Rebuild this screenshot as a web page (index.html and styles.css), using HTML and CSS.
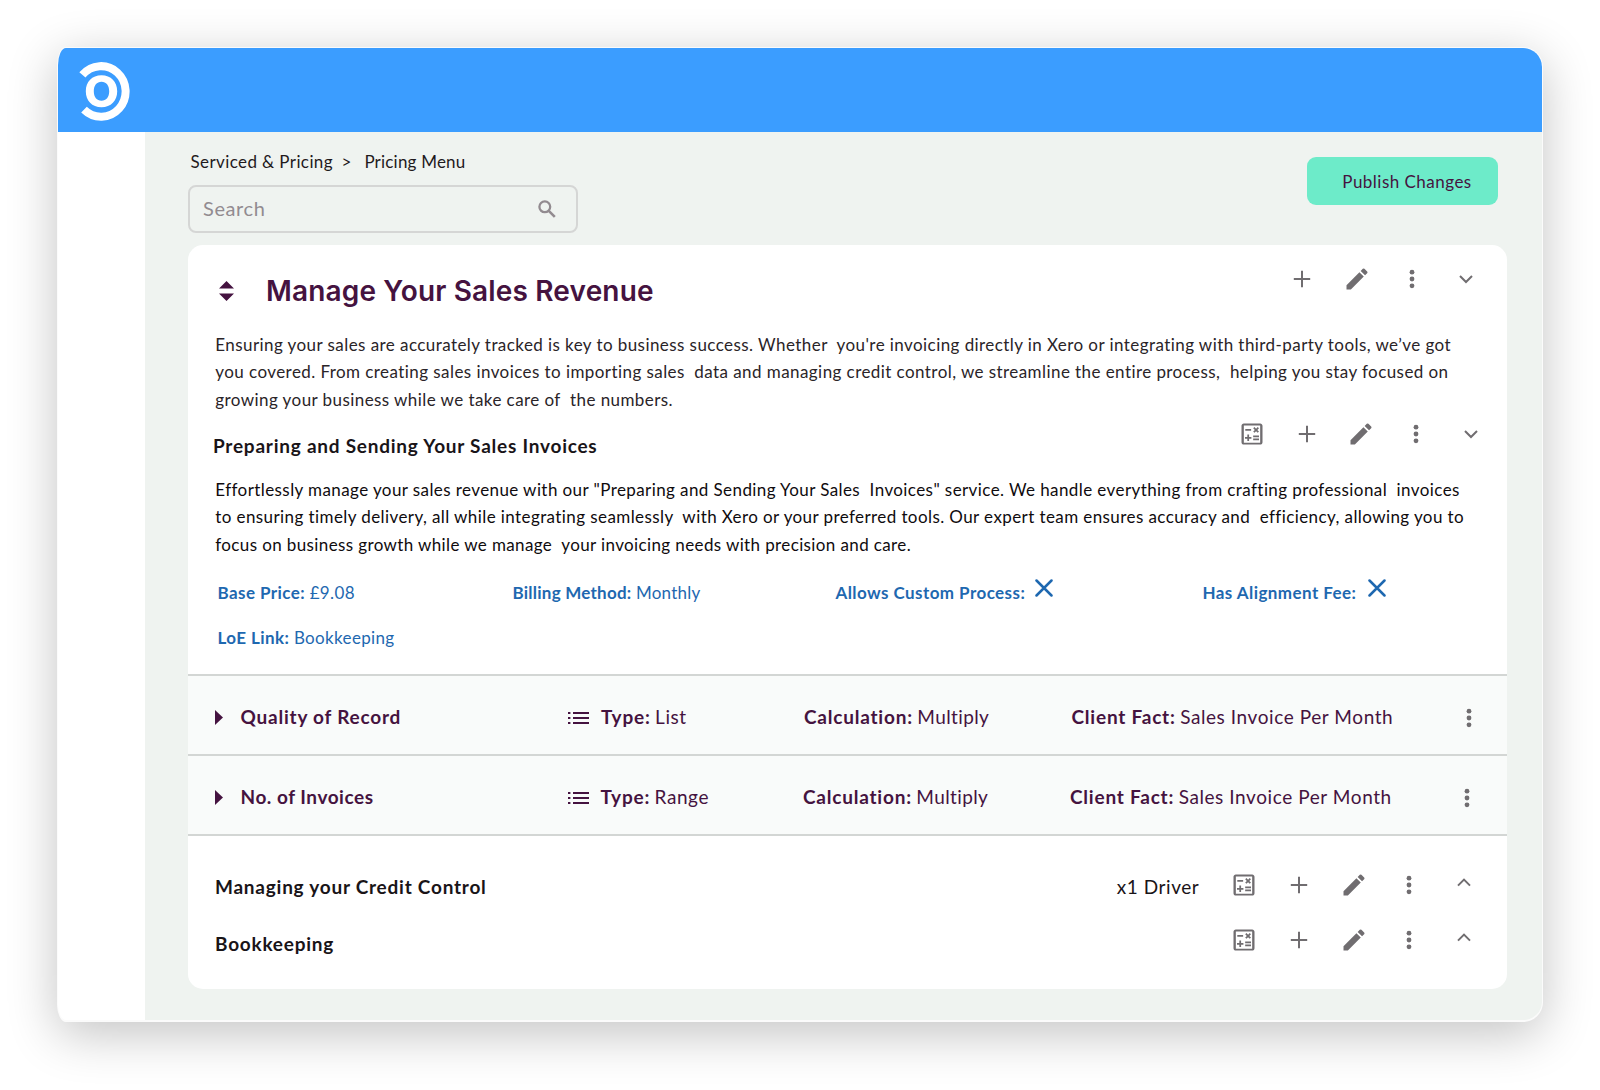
FILE: index.html
```html
<!DOCTYPE html>
<html lang="en">
<head>
<meta charset="utf-8">
<title>Pricing Menu</title>
<link rel="stylesheet" href="styles.css">
</head>
<body>
<svg class="sprite" aria-hidden="true">
  <symbol id="i-calc" viewBox="0 0 24 24"><path d="M19 3H5c-1.1 0-2 .9-2 2v14c0 1.1.9 2 2 2h14c1.1 0 2-.9 2-2V5c0-1.1-.9-2-2-2zm0 16.500H5V4.700h14zM6.250 7.720h5v1.500h-5zM13 15.750h5v1.500h-5zM13 13.250h5v1.500h-5zM8 18h1.500v-2h2v-1.500h-2v-2H8v2H6V16h2zM14.090 10.950l1.410-1.410 1.410 1.410 1.060-1.060-1.410-1.420 1.410-1.410L16.910 6 15.500 7.410 14.090 6l-1.060 1.060 1.410 1.410-1.410 1.420z" fill-rule="evenodd"/></symbol>
  <symbol id="i-plus" viewBox="0 0 28 28"><path d="M14 5.800v16.400M5.800 14h16.400" stroke="currentColor" stroke-width="2" fill="none"/></symbol>
  <symbol id="i-edit" viewBox="0 0 24 24"><path d="M3 17.250V21h3.750L17.810 9.940l-3.750-3.750L3 17.250zM20.710 7.040a1 1 0 0 0 0-1.410l-2.340-2.340a1 1 0 0 0-1.410 0l-1.830 1.830 3.750 3.750 1.830-1.830z"/></symbol>
  <symbol id="i-dots" viewBox="0 0 28 28"><circle cx="14" cy="7.200" r="2.400"/><circle cx="14" cy="14" r="2.400"/><circle cx="14" cy="20.800" r="2.400"/></symbol>
  <symbol id="i-down" viewBox="0 0 28 28"><path d="M8 11l6 6 6-6" stroke="currentColor" stroke-width="2" fill="none"/></symbol>
  <symbol id="i-up" viewBox="0 0 28 28"><path d="M8 14.600l6-6 6 6" stroke="currentColor" stroke-width="2" fill="none"/></symbol>
  <symbol id="i-list" viewBox="0 0 21 14"><path d="M0 2h2.400M0 7h2.400M0 12h2.400M5 2h16M5 7h16M5 12h16" stroke="currentColor" stroke-width="2.200" fill="none"/></symbol>
  <symbol id="i-cross" viewBox="0 0 18 18"><path d="M1.500 1.500l15 15M16.500 1.500l-15 15" stroke="currentColor" stroke-width="2.500" stroke-linecap="round" fill="none"/></symbol>
</svg>
<div class="window">
  <header class="topbar">
    <svg class="logo" viewBox="0 0 54 62" width="54" height="62"><path d="M6.400 13.900A24.600 25.300 0 1 1 8 48.700" fill="none" stroke="#fff" stroke-width="8"/><path fill="#fff" fill-rule="evenodd" d="M25.500 14.300c9.500 0 15.700 6.500 15.700 16s-6.200 16-15.700 16-15.700-6.500-15.700-16 6.200-16 15.700-16zM25.500 20.800c-4.700 0-7.700 3.800-7.700 9.500s3 9.500 7.700 9.500 7.700-3.800 7.700-9.500-3-9.500-7.700-9.500z"/></svg>
  </header>
  <div class="body">
    <aside class="rail"></aside>
    <main class="content">
      <div class="toolbar">
        <div class="finder">
          <nav class="crumbs"><span class="c1">Serviced &amp; Pricing</span><span class="sep">&gt;</span><span class="c2">Pricing Menu</span></nav>
          <div class="search"><span class="ph">Search</span><svg class="lens" viewBox="0 0 18 18" width="18" height="18"><circle cx="6.800" cy="6.800" r="5.400" fill="none" stroke="currentColor" stroke-width="2.300"/><path d="M10.800 10.800l6 6" stroke="currentColor" stroke-width="2.600"/></svg></div>
        </div>
        <button class="publish">Publish Changes</button>
      </div>
      <section class="card">
        <div class="head">
          <svg class="sort" viewBox="0 0 15 20" width="15" height="20"><path d="M0 7.500L7.500 0 15 7.500zM0 12.500h15L7.500 20z"/></svg>
          <h1>Manage Your Sales Revenue</h1>
          <div class="actions"><svg><use href="#i-plus"/></svg><svg><use href="#i-edit"/></svg><svg><use href="#i-dots"/></svg><svg><use href="#i-down"/></svg></div>
        </div>
        <p class="copy intro"><span>Ensuring your sales are accurately tracked is key to business success. Whether  you're invoicing directly in Xero or integrating with third-party tools, we’ve got</span><span>you covered. From creating sales invoices to importing sales  data and managing credit control, we streamline the entire process,  helping you stay focused on</span><span>growing your business while we take care of  the numbers.</span></p>
        <div class="subhead">
          <h2>Preparing and Sending Your Sales Invoices</h2>
          <div class="actions"><svg><use href="#i-calc"/></svg><svg><use href="#i-plus"/></svg><svg><use href="#i-edit"/></svg><svg><use href="#i-dots"/></svg><svg><use href="#i-down"/></svg></div>
        </div>
        <p class="copy"><span>Effortlessly manage your sales revenue with our "Preparing and Sending Your Sales  Invoices" service. We handle everything from crafting professional  invoices</span><span>to ensuring timely delivery, all while integrating seamlessly  with Xero or your preferred tools. Our expert team ensures accuracy and  efficiency, allowing you to</span><span class="last">focus on business growth while we manage  your invoicing needs with precision and care.</span></p>
        <div class="facts">
          <div><b>Base Price:</b> <span>£9.08</span></div>
          <div class="billing"><b>Billing Method:</b> <span>Monthly</span></div>
          <div><b>Allows Custom Process:</b><svg class="cross"><use href="#i-cross"/></svg></div>
          <div><b>Has Alignment Fee:</b><svg class="cross wide"><use href="#i-cross"/></svg></div>
          <div><b>LoE Link:</b> <span>Bookkeeping</span></div>
        </div>
        <div class="driver">
          <div class="name"><i class="tri"></i><b>Quality of Record</b></div>
          <div class="type"><svg class="list"><use href="#i-list"/></svg><b>Type:</b> <span>List</span></div>
          <div><b>Calculation:</b> <span class="thin">Multiply</span></div>
          <div><b>Client Fact:</b> <span>Sales Invoice Per Month</span></div>
          <svg class="more"><use href="#i-dots"/></svg>
        </div>
        <div class="driver second">
          <div class="name"><i class="tri"></i><b>No. of Invoices</b></div>
          <div class="type"><svg class="list"><use href="#i-list"/></svg><b>Type:</b> <span>Range</span></div>
          <div><b>Calculation:</b> <span class="thin">Multiply</span></div>
          <div><b>Client Fact:</b> <span>Sales Invoice Per Month</span></div>
          <svg class="more"><use href="#i-dots"/></svg>
        </div>
        <div class="service first">
          <h2>Managing your Credit Control</h2>
          <span class="count">x1 Driver</span>
          <div class="actions"><svg><use href="#i-calc"/></svg><svg><use href="#i-plus"/></svg><svg><use href="#i-edit"/></svg><svg><use href="#i-dots"/></svg><svg><use href="#i-up"/></svg></div>
        </div>
        <div class="service">
          <h2>Bookkeeping</h2>
          <div class="actions"><svg><use href="#i-calc"/></svg><svg><use href="#i-plus"/></svg><svg><use href="#i-edit"/></svg><svg><use href="#i-dots"/></svg><svg><use href="#i-up"/></svg></div>
        </div>
      </section>
    </main>
  </div>
</div>
</body>
</html>
```
FILE: styles.css
```css
* { box-sizing: border-box; }
body { margin: 0; width: 1600px; height: 1090px; padding: 47px 57px 0; background: #fff; font-family: Lato, "Liberation Sans", sans-serif; font-size: 17px; line-height: 24px; color: #1a1418; overflow: hidden; }
h1, h2, p { margin: 0; }
b { font-weight: 700; }
.sprite { display: block; width: 0; height: 0; }
svg { display: block; flex: none; fill: currentColor; }

.window { width: 1486px; height: 975px; border-radius: 9px 20px 20px 9px / 18px 20px 20px 18px; overflow: hidden; background: #fff; border: 1px solid #fbfbfb; border-bottom-width: 2px; box-shadow: 0 12px 50px rgba(0, 0, 0, .24); }
.topbar { height: 84px; margin: 0 -1px; background: #3b9dff; }
.logo { margin-left: 19px; transform: translateY(13px); }
.body { display: flex; height: 888px; }
.rail { width: 87px; }
.content { flex: 1; background: #eff3f0; padding: 0 35px 0 43px; }

.toolbar { display: flex; justify-content: space-between; height: 113px; }
.crumbs { display: flex; padding: 18px 0 0 2.500px; height: 53px; color: #1f1a1d; }
.c1 { letter-spacing: .4px; }
.c2 { letter-spacing: .2px; }
.sep { margin: 0 13px 0 8.500px; }
.search { display: flex; align-items: center; justify-content: space-between; width: 390px; height: 48px; border: 2.500px solid #d5d6d5; border-radius: 8px; padding: 0 20px 0 13px; font-size: 20px; color: #928b90; }
.ph { letter-spacing: .6px; margin-top: -3px; }
.publish { width: 191px; height: 48px; margin: 25px 9px 0 0; border: 0; border-radius: 9px; background: #6debc9; color: #451340; font: inherit; letter-spacing: .48px; padding: 2px 0 0 9px; }

.card { height: 744px; border-radius: 15px; background: #fff; overflow: hidden; white-space: nowrap; }
.head { display: flex; height: 85.500px; padding: 0 26.700px 0 31px; color: #451340; }
.sort { margin: 35.500px 32px 0 0; }
h1 { font: 600 28px/40px Inter, "Liberation Sans", sans-serif; letter-spacing: .16px; margin-top: 25.500px; }
.actions { display: flex; gap: 26.800px; margin-left: auto; color: #706d70; }
.actions svg, .more { width: 28px; height: 28px; }
.head .actions { margin-top: 20px; }
.copy { padding-left: 27.300px; line-height: 27.500px; color: #0f0b0e; letter-spacing: .41px; }
.copy .last { letter-spacing: .38px; }
.intro { color: #2a2428; letter-spacing: .43px; }
.copy span { display: block; width: max-content; white-space: pre; }
h2 { font-size: 19px; line-height: 24px; font-weight: 700; letter-spacing: .76px; color: #191418; }
.subhead { display: flex; height: 62.700px; padding: 0 22px 0 25px; }
.subhead h2 { margin-top: 20.600px; }
.subhead .actions { margin-top: 7px; }

.facts { display: grid; grid-template-columns: 295px 323px 367px auto; grid-auto-rows: 24px; row-gap: 21px; height: 115.800px; padding: 23px 0 0 29.500px; letter-spacing: .43px; color: #1e68b0; }
.facts div, .driver div { display: flex; gap: 4.500px; }
.facts span { letter-spacing: .35px; }
.billing b, .facts .billing span { letter-spacing: .24px; }
.cross { width: 18px; height: 18px; margin: -2px 0 0 5px; }
.cross.wide { margin-left: 7px; }

.driver { display: grid; grid-template-columns: 353px 236px 267.500px 383px auto; height: 80px; border-top: 2px solid #d3d6d4; background: #f9fbfa; padding: 29.500px 0 0 27px; font-size: 19px; letter-spacing: .78px; color: #451340; }
.driver span { letter-spacing: .58px; }
.driver .thin { letter-spacing: .38px; }
.second { grid-template-columns: 352.500px 235.500px 267px 382.500px auto; }
.second .name b { letter-spacing: .53px; }
.driver .tri { width: 8px; height: 15px; margin: 4.500px 13px 0 0; background: currentColor; clip-path: polygon(0 0, 100% 50%, 0 100%); }
.list { width: 21px; height: 14px; margin: 5.500px 7.500px 0 0; }
.more { margin-top: -1.500px; color: #706d70; }
.service { display: flex; height: 55px; padding: 0 29.500px 0 27px; }
.service h2 { margin-top: 6.500px; }
.first { height: 91.700px; border-top: 2px solid #d3d6d4; }
.first h2, .count { margin-top: 38.600px; }
.count { margin-left: auto; font-size: 19px; letter-spacing: .55px; }
.first .actions { margin: 34.700px 0 0 31px; }
```
